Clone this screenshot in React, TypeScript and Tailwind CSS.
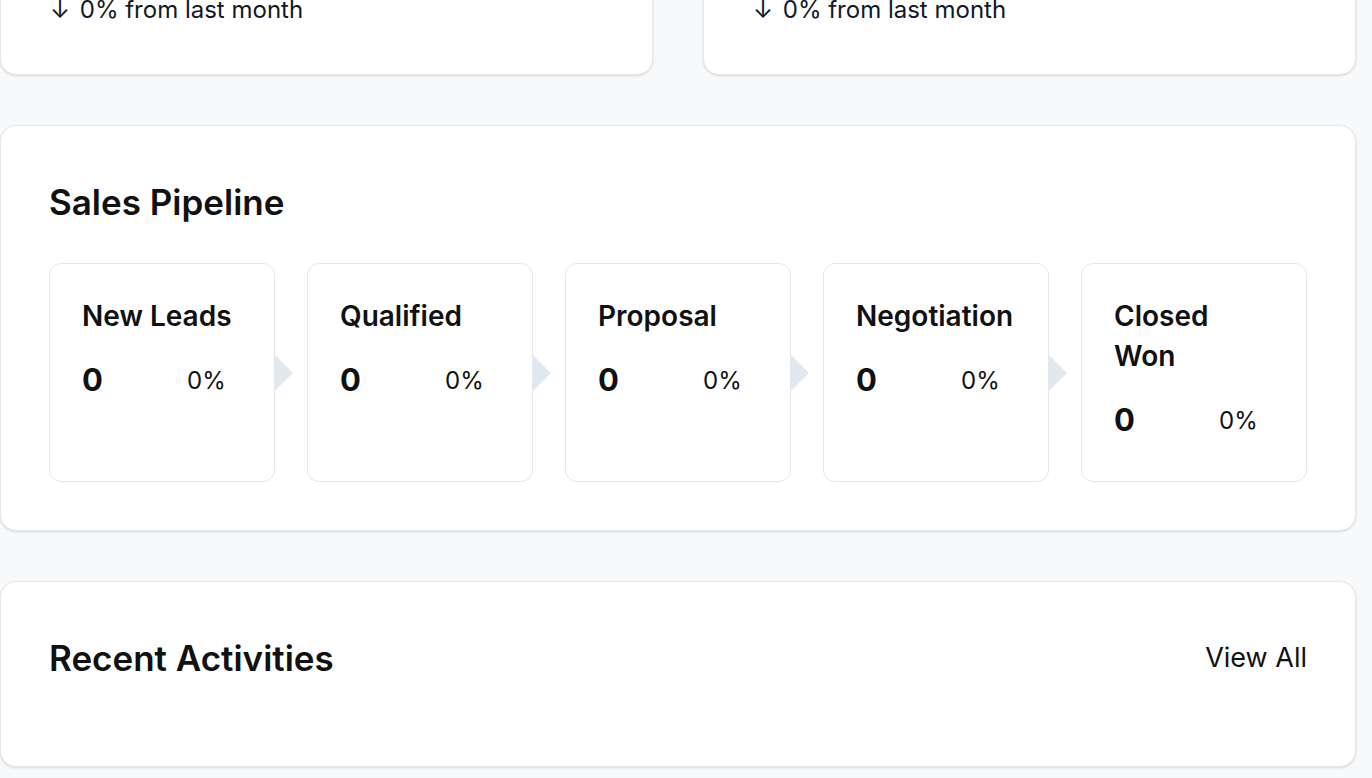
import { Fragment } from "react";

const stages = [
  { name: "New Leads", count: 0, share: "0%" },
  { name: "Qualified", count: 0, share: "0%" },
  { name: "Proposal", count: 0, share: "0%" },
  { name: "Negotiation", count: 0, share: "0%" },
  { name: "Closed Won", count: 0, share: "0%" },
];

const stats = [
  { label: "Total Revenue", value: "$0", change: "0% from last month" },
  { label: "Active Deals", value: "0", change: "0% from last month" },
];

function StatCard({ label, value, change }: { label: string; value: string; change: string }) {
  return (
    <div className="bg-white border border-[#e5e7eb] rounded-[16px] shadow-sm p-[48px]">
      <p className="text-[28px] leading-[40px] text-[#4b5563]">{label}</p>
      <p className="mt-[8px] text-[48px] leading-[64px] font-bold text-[#111827]">{value}</p>
      <p className="mt-[8px] text-[24px] leading-[32px] text-[#111827]">
        <span className="ml-[1px] mr-[3px]">↓</span> {change}
      </p>
    </div>
  );
}

function StageCard({ name, count, share, last }: { name: string; count: number; share: string; last: boolean }) {
  return (
    <div className="relative flex-1 bg-white border border-[#e5e7eb] rounded-[12px] p-[32px]">
      <h3 className="text-[28px] leading-[40px] font-semibold text-[#111111]">{name}</h3>
      <div className="mt-[16px] flex items-center h-[57px]">
        <span className="w-[105px] text-[31px] font-bold text-[#111111]">{count}</span>
        <span className="text-[24px] text-[#111111]">{share}</span>
      </div>
      {!last && (
        <div className="absolute top-1/2 -translate-y-1/2 left-full w-0 h-0 border-y-[19px] border-y-transparent border-l-[19px] border-l-[#e2e8f0]" />
      )}
    </div>
  );
}

export default function App() {
  return (
    <div className="min-h-screen bg-[#f8f9fb] font-['Inter',sans-serif] text-[#111111] overflow-hidden">
      <div className="pr-[16px] -mt-[175px] flex flex-col gap-[50px] pb-[48px]">
        <div className="grid grid-cols-2 gap-[50px]">
          {stats.map((s) => (
            <StatCard key={s.label} {...s} />
          ))}
        </div>

        <div className="bg-white border border-[#e5e7eb] rounded-[16px] shadow-sm p-[48px]">
          <h2 className="text-[35px] leading-[56px] font-semibold mb-[33px]">Sales Pipeline</h2>
          <div className="flex gap-[32px]">
            {stages.map((st, i) => (
              <Fragment key={st.name}>
                <StageCard {...st} last={i === stages.length - 1} />
              </Fragment>
            ))}
          </div>
        </div>

        <div className="bg-white border border-[#e5e7eb] rounded-[16px] shadow-sm p-[48px]">
          <div className="flex items-center justify-between h-[56px] mb-[32px]">
            <h2 className="text-[35px] leading-[56px] font-semibold">Recent Activities</h2>
            <button className="text-[27px] leading-[40px] text-[#111111]">View All</button>
          </div>
          <div className="flex flex-col gap-[16px]" />
        </div>
      </div>
    </div>
  );
}
